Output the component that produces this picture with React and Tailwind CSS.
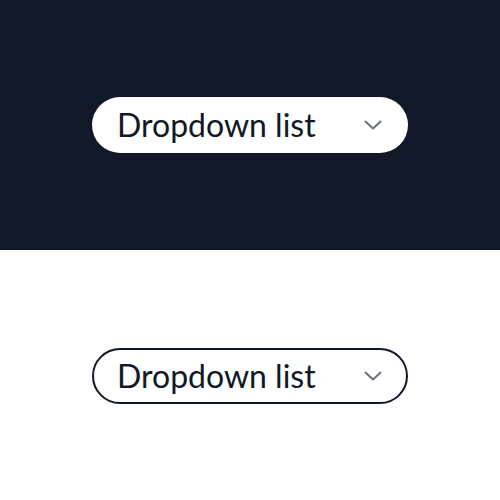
import React from "react";

const Chevron = () => (
  <svg width="18" height="10" viewBox="0 0 18 10" fill="none">
    <path d="M1.5 1.5 L9 8.5 L16.5 1.5" stroke="#6b7280" strokeWidth="2" strokeLinecap="round" strokeLinejoin="round" />
  </svg>
);

const Dropdown = ({ outlined }) => (
  <button
    className={
      outlined
        ? "w-[316px] h-[56px] rounded-full bg-white border-2 border-[#111827] flex items-center justify-between pl-[23px] pr-[24px]"
        : "w-[316px] h-[56px] rounded-full bg-white flex items-center justify-between pl-[25px] pr-[26px]"
    }
  >
    <span className="text-[32px] leading-none text-[#111827] font-['Lato',sans-serif]">Dropdown list</span>
    <Chevron />
  </button>
);

export default function App() {
  return (
    <div className="w-[500px] h-[500px] flex flex-col">
      <div className="h-[250px] bg-[#111827] flex items-center justify-center">
        <Dropdown />
      </div>
      <div className="h-[250px] bg-white flex items-center justify-center pt-[2px]">
        <Dropdown outlined />
      </div>
    </div>
  );
}
